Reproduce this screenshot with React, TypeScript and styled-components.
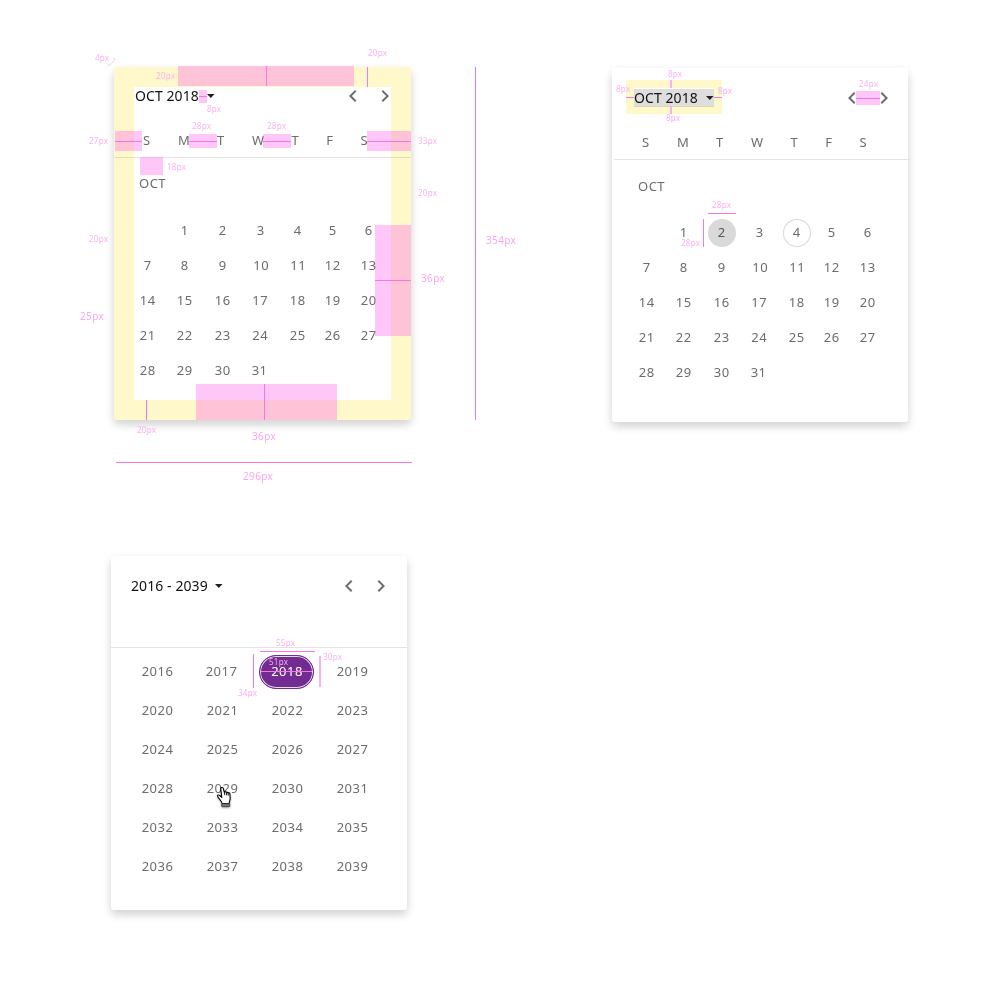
import React from 'react';
import styled, { createGlobalStyle, css } from 'styled-components';

const GlobalStyle = createGlobalStyle`
  body { margin: 0; background: #fff; font-family: 'Noto Sans', 'Open Sans', sans-serif; }
  * { box-sizing: border-box; }
`;

const Board = styled.main`
  position: relative;
  width: 989px;
  height: 989px;
  overflow: hidden;
  padding: 67px 0 0 111px;
  display: grid;
  grid-template-columns: 501px 296px;
  grid-template-rows: 489px 354px;
  align-items: start;
`;

const Card = styled.section<{ $w?: number; $h?: number; $ml?: number; $mt?: number }>`
  width: ${p => p.$w ?? 296}px;
  height: ${p => p.$h ?? 354}px;
  margin: ${p => p.$mt ?? 0}px 0 0 ${p => p.$ml ?? 0}px;
  background: #fff;
  border-radius: 3px;
  box-shadow: 0 5px 8px rgba(0, 0, 0, 0.13), 0 3px 12px rgba(0, 0, 0, 0.06);
`;

const CardBody = styled.div<{ $nudge?: number }>`
  width: 296px;
  margin-left: ${p => -(p.$nudge ?? 0)}px;
  display: flow-root;
`;

const TitleBar = styled.header<{ $left?: number; $nudge?: number }>`
  display: flex;
  align-items: center;
  height: ${p => 60 - (p.$nudge ?? 0) * 2}px;
  margin-bottom: ${p => p.$nudge ?? 0}px;
  padding: 0 10px 0 ${p => p.$left ?? 22}px;
`;

const Period = styled.div<{ $shaded?: boolean }>`
  display: flex;
  align-items: center;
  height: 18px;
  font-size: 14px;
  letter-spacing: 0.08px;
  line-height: 18px;
  color: #111;
  white-space: nowrap;
  ${p => p.$shaded && css`width: 80px; background: #dedede;`}
`;

const Caret = styled.svg<{ $gap: number }>`
  width: 8px;
  height: 4px;
  margin: 0 0 0 ${p => p.$gap}px;
  fill: #222;
  flex: none;
`;

const Nav = styled.nav<{ $right?: number; $gap?: number }>`
  display: flex;
  margin-left: auto;
  margin-right: ${p => p.$right ?? 0}px;
  gap: ${p => p.$gap ?? 8}px;
`;

const Chevron = styled.svg`
  width: 24px;
  height: 24px;
  fill: #6e6e6e;
`;

const Weekdays = styled.div`
  display: grid;
  grid-template-columns: 37px 38px 35px 40px 34px 35px 34px;
  height: 31px;
  padding-left: 15px;
  font-size: 13px;
  line-height: 29px;
  color: #6c6c6c;
  text-align: center;
`;

const Divider = styled.div<{ $shift?: number }>`
  height: 1px;
  width: 296px;
  margin-left: ${p => p.$shift ?? 0}px;
  background: #e4e4e4;
`;

const MonthName = styled.div<{ $nudge?: number }>`
  height: 55px;
  padding-left: 26px;
  font-size: 13px;
  letter-spacing: 0.5px;
  line-height: ${p => 53 - (p.$nudge ?? 0) * 2}px;
  color: #6c6c6c;
`;

const DayGrid = styled.div`
  display: grid;
  grid-template-columns: 37px 37px 39px 36px 39px 31px 41px;
  grid-auto-rows: 35px;
  align-items: center;
  justify-items: center;
  padding-left: 16.3px;
`;

const Day = styled.span<{ $mark?: 'filled' | 'ring'; $shift?: number }>`
  display: block;
  width: 28px;
  height: 28px;
  border-radius: 50%;
  font-size: 13px;
  letter-spacing: 0.5px;
  line-height: 27px;
  text-align: center;
  color: #6c6c6c;
  text-indent: ${p => (p.$shift ?? 0) * 2}px;
  ${p => p.$mark === 'filled' && css`background: #d9d9d9; color: #555;`}
  ${p => p.$mark === 'ring' && css`box-shadow: inset 0 0 0 1px #d9d9d9;`}
`;

const YearGrid = styled.div`
  display: grid;
  grid-template-columns: repeat(4, 65px);
  grid-auto-rows: 39px;
  align-items: center;
  justify-items: center;
  padding: 4px 0 0 14px;
`;

const Year = styled.span<{ $selected?: boolean; $shift?: number }>`
  width: 55px;
  height: 34px;
  border-radius: 17px;
  font-size: 13px;
  letter-spacing: 0.5px;
  line-height: 33px;
  text-align: center;
  text-indent: ${p => (p.$shift ?? 0) * 2}px;
  color: #6c6c6c;
  ${p => p.$selected && css`
    color: #fff;
    line-height: 31px;
    margin-right: 2px;
    text-indent: 1px;
    border: 1px solid #722b90;
    background: #722b90;
    box-shadow: inset 0 0 0 1px #e6d9ec;
  `}
`;

const HeaderGap = styled.div`
  height: 31px;
`;

const Redlines = styled.div`
  position: absolute;
  inset: 0;
  pointer-events: none;
`;

type Box = { $x: number; $y: number; $w: number; $h: number };

const placed = css<Box>`
  position: absolute;
  left: ${p => p.$x}px;
  top: ${p => p.$y}px;
  width: ${p => p.$w}px;
  height: ${p => p.$h}px;
`;

const PaddingFrame = styled.div<Box & { $t: number; $s?: number; $r?: number }>`
  ${placed}
  border: ${p => p.$t}px solid #fff8ca;
  border-radius: ${p => p.$r ?? 0}px;
  mix-blend-mode: multiply;
`;

const Spacer = styled.div<Box>`
  ${placed}
  background: rgba(252, 114, 234, 0.4);
`;

const Rule = styled.div<Box & { $soft?: boolean }>`
  ${placed}
  background: ${p => (p.$soft ? '#fbb0f0' : '#fb74e4')};
`;

const Label = styled.span<{ $x: number; $y: number; $big?: boolean }>`
  position: absolute;
  left: ${p => p.$x}px;
  top: ${p => p.$y - 7}px;
  font-size: ${p => (p.$big ? 10 : 8)}px;
  letter-spacing: ${p => (p.$big ? 0.35 : 0.25)}px;
  line-height: 14px;
  color: ${p => (p.$big ? '#fba6ee' : '#fcb0f1')};
  white-space: nowrap;
`;

const RadiusMark = styled.svg`
  position: absolute;
  left: 107px;
  top: 57px;
  width: 9px;
  height: 10px;
`;

const Pointer = styled.svg`
  position: absolute;
  left: 216px;
  top: 786px;
  width: 17px;
  height: 24px;
  filter: drop-shadow(0 1px 1px rgba(0, 0, 0, 0.3));
`;

const WEEK = ['S', 'M', 'T', 'W', 'T', 'F', 'S'];
const DAYS = Array.from({ length: 31 }, (_, i) => i + 1);
const YEARS = Array.from({ length: 24 }, (_, i) => 2016 + i);
const DAY_SHIFT: Record<number, number> = { 3: 0.5, 10: 1, 11: 0.5, 31: -0.7 };

function PeriodSwitch({ text, shaded, gap = 8 }: { text: string; shaded?: boolean; gap?: number }) {
  return (
    <Period $shaded={shaded}>
      {text}
      <Caret $gap={gap} viewBox="0 0 8 4"><path d="M0 0h7.6L3.8 3.9z" /></Caret>
    </Period>
  );
}

function Arrows({ right, gap }: { right?: number; gap?: number }) {
  return (
    <Nav $right={right} $gap={gap}>
      <Chevron viewBox="0 0 24 24"><path d="M15.41 7.41L14 6l-6 6 6 6 1.41-1.41L10.83 12z" /></Chevron>
      <Chevron viewBox="0 0 24 24"><path d="M10 6L8.59 7.41 13.17 12l-4.58 4.59L10 18l6-6z" /></Chevron>
    </Nav>
  );
}

function MonthView({ marked, nudge = 0 }: { marked?: boolean; nudge?: number }) {
  return (
    <CardBody $nudge={nudge}>
      <TitleBar $nudge={nudge}>
        <PeriodSwitch text="OCT 2018" shaded={marked} gap={marked ? 8 : 8.5} />
        <Arrows right={marked ? 2.5 : 2.3} gap={marked ? 7.5 : 7.6} />
      </TitleBar>
      <Weekdays>{WEEK.map((d, i) => <span key={i}>{d}</span>)}</Weekdays>
      <Divider $shift={2} />
      <MonthName $nudge={nudge}>OCT</MonthName>
      <DayGrid>
        <span />
        {DAYS.map(d => (
          <Day key={d} $shift={DAY_SHIFT[d]} $mark={marked ? (d === 2 ? 'filled' : d === 4 ? 'ring' : undefined) : undefined}>
            {d}
          </Day>
        ))}
      </DayGrid>
    </CardBody>
  );
}

function YearView() {
  return (
    <CardBody>
      <TitleBar $left={20}>
        <PeriodSwitch text="2016 - 2039" gap={7.5} />
        <Arrows right={4.3} gap={7.6} />
      </TitleBar>
      <HeaderGap />
      <Divider />
      <YearGrid>
        {YEARS.map(y => (
          <Year key={y} $selected={y === 2018} $shift={y === 2017 ? -1 : 0}>{y}</Year>
        ))}
      </YearGrid>
    </CardBody>
  );
}

const SPACERS = [
  [178, 66, 176, 20], [199, 90, 8, 13], [115, 131, 27, 20], [189, 134, 28, 14],
  [263, 134, 28, 14], [367, 131, 44, 20], [140, 157, 23, 18], [375, 225, 36, 111],
  [196, 384, 141, 36], [856, 91, 24, 14],
];

const RULES = [
  [266, 66, 1, 20], [367, 67, 1, 20], [199, 96, 8, 1], [115, 141, 27, 1], [189, 141, 28, 1],
  [263, 141, 28, 1], [367, 141, 44, 1], [375, 280, 36, 1], [264, 384, 1, 36], [146, 400, 1, 20],
  [475, 67, 1, 353], [115.5, 462, 296, 1],
  [626, 97, 8, 1], [714, 97, 8, 1], [856, 98, 24, 1],
  [708, 213, 28, 1], [703, 219, 1, 28],
  [260, 651, 55, 1], [253, 654, 1, 34], [261, 671, 51, 1],
];

const SOFT_RULES = [[670, 80, 2, 8], [670, 106, 2, 8], [319, 656, 2, 31]];

const SMALL_LABELS: [string, number, number][] = [
  ['4px', 95, 58], ['20px', 156, 76], ['20px', 368, 53], ['8px', 207, 109], ['28px', 192, 126],
  ['28px', 267, 126], ['27px', 89, 141], ['33px', 418, 141], ['18px', 167, 167], ['20px', 418, 193],
  ['20px', 89, 239], ['20px', 137, 430],
  ['8px', 668, 74], ['8px', 616, 89], ['8px', 718, 91], ['8px', 666, 118], ['24px', 859, 84],
  ['28px', 712, 205], ['28px', 681, 243],
  ['55px', 276, 643], ['30px', 323, 657], ['34px', 238, 693], ['51px', 269, 662],
];

const BIG_LABELS: [string, number, number][] = [
  ['25px', 80, 316], ['36px', 421, 278], ['354px', 486, 240], ['36px', 252, 436], ['296px', 243, 476],
];

export default function App() {
  return (
    <>
      <GlobalStyle />
      <Board>
        <Card $w={297} $h={353} $ml={3}><MonthView nudge={1} /></Card>
        <Card $mt={1}><MonthView marked /></Card>
        <Card><YearView /></Card>
        <Redlines>
          <PaddingFrame $x={114} $y={67} $w={297} $h={353} $t={20} $r={3} />
          <PaddingFrame $x={626} $y={80} $w={96} $h={34} $t={8} />
          {SPACERS.map(([x, y, w, h], i) => <Spacer key={i} $x={x} $y={y} $w={w} $h={h} />)}
          {RULES.map(([x, y, w, h], i) => <Rule key={i} $x={x} $y={y} $w={w} $h={h} />)}
          {SOFT_RULES.map(([x, y, w, h], i) => <Rule key={i} $soft $x={x} $y={y} $w={w} $h={h} />)}
          {SMALL_LABELS.map(([t, x, y], i) => <Label key={i} $x={x} $y={y}>{t}</Label>)}
          {BIG_LABELS.map(([t, x, y], i) => <Label key={i} $big $x={x} $y={y}>{t}</Label>)}
          <RadiusMark viewBox="0 0 9 10" fill="none" stroke="#fcb8f2" strokeWidth="0.8">
            <path d="M7.400 1.200C8 3.600 6.800 4.600 5.400 5.300C4 6.200 4 8.400 1.200 8.500M6.400 2.200l1-1M1 7.400l.2 1.200" />
          </RadiusMark>
          <Pointer viewBox="0 0 17 24">
            <path
              d="M4.700 2.300c.8-1.300 2.400-.9 2.700.5l.8 3.200c.9-.7 1.800-.3 2 .4.8-.6 1.700-.2 1.900.6 1-.4 1.700.1 1.800 1l.3 4.500c0 1.800-.9 3.100-1.100 5H6.200C5.400 14.800 2.900 12.800 1.700 10.400c-.6-1.300 1-1.900 1.900-.9l2.200 1.900z"
              fill="#fff" stroke="#000" strokeWidth="1.1" strokeLinejoin="round"
            />
            <path d="M8.300 6l.5 3.200M10.300 6.600l.4 2.800M12.100 7.200l.3 2.400" stroke="#000" strokeWidth="0.9" fill="none" />
            <rect x="5.600" y="17.700" width="8.200" height="3" rx="0.800" fill="#777" stroke="#333" strokeWidth="0.8" />
          </Pointer>
        </Redlines>
      </Board>
    </>
  );
}
